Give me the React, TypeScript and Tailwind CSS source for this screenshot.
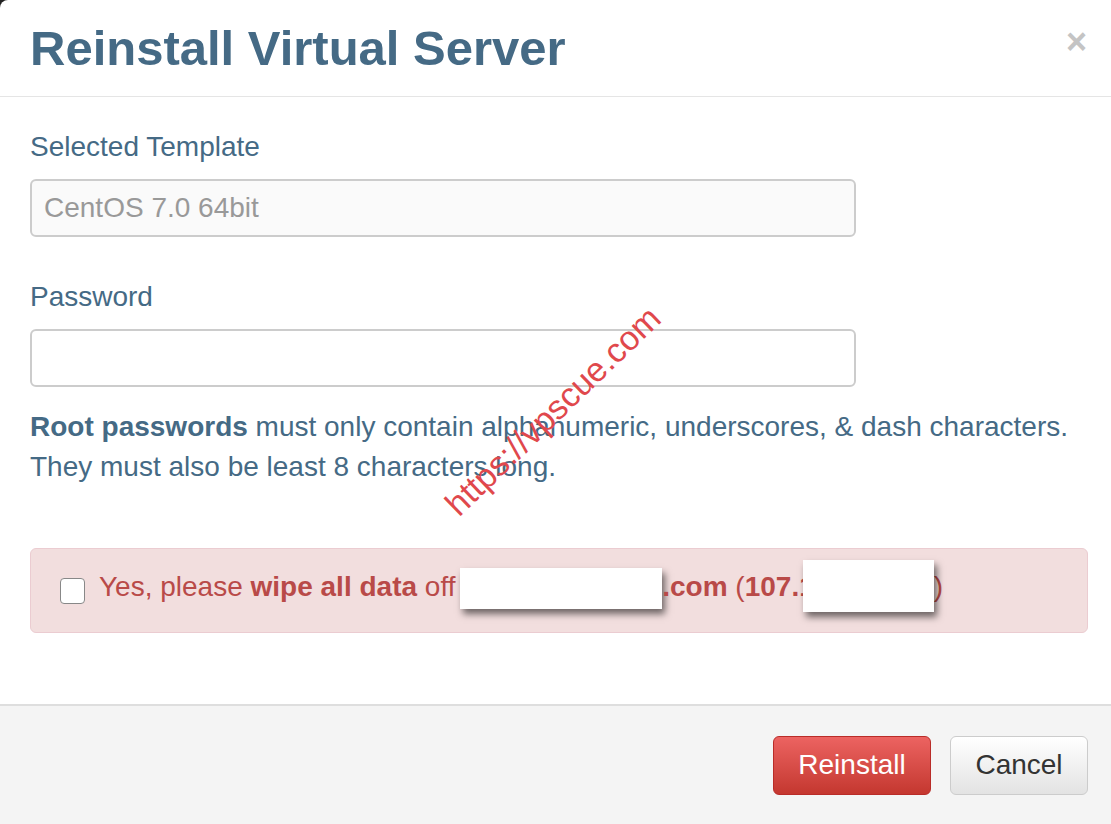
import { useState } from 'react';

export default function App() {
  const [wipe, setWipe] = useState(false);

  return (
    <div className="w-[1111px] h-[824px] bg-[#222] overflow-hidden" style={{ fontFamily: '"Liberation Sans", Arial, sans-serif' }}>
      <div className="relative w-full h-full bg-white rounded-tl-[8px] flex flex-col">
        {/* Header */}
        <div className="h-[97px] shrink-0 border-b border-[#e5e5e5] pl-[30px] pr-[23px] flex items-center justify-between">
          <h3 className="text-[49px] font-bold text-[#456a85] leading-none">Reinstall Virtual Server</h3>
          <button className="text-[36px] font-bold text-[#c4c4c4] leading-none mr-[1px] -mt-[12px]">×</button>
        </div>

        {/* Body */}
        <div className="flex-1 pl-[30px] pr-[23px] pt-[32px] text-[#456a85] text-[28px]">
          <label className="block leading-[36px] mb-[14px]">Selected Template</label>
          <input
            type="text"
            disabled
            value="CentOS 7.0 64bit"
            className="block w-[826px] h-[58px] rounded-[6px] border-2 border-[#ccc] bg-[#fafafa] px-[12px] text-[28px] text-[#999]"
          />

          <label className="block leading-[36px] mt-[42px] mb-[14px]">Password</label>
          <input
            type="password"
            className="block w-[826px] h-[58px] rounded-[6px] border-2 border-[#ccc] bg-white px-[12px] text-[28px] text-[#555] outline-none"
          />

          <p className="mt-[20px] leading-[40px]">
            <strong className="font-bold">Root passwords</strong> must only contain alphanumeric, underscores, &amp; dash characters.
            <br />
            They must also be least 8 characters long.
          </p>

          <div className="mt-[61px] h-[85px] rounded-[6px] border border-[#ebccd1] bg-[#f2dede] pl-[29px] flex items-center text-[#b94a48]">
            <input
              type="checkbox"
              checked={wipe}
              onChange={(e) => setWipe(e.target.checked)}
              className="appearance-none w-[25px] h-[26px] rounded-[4px] border border-[#888] bg-white shrink-0"
            />
            <span className="ml-[14px] whitespace-nowrap -mt-[4px]">
              Yes, please <strong className="font-bold">wipe all data</strong> off{' '}
              <span className="inline-block align-middle -ml-[3px] w-[202px] h-[41px] bg-white shadow-[3px_5px_7px_rgba(0,0,0,0.55)]" />
              <strong className="font-bold">.com</strong> (<strong className="font-bold">107.1</strong>
              <span className="relative -top-[3px] inline-block align-middle -ml-[12px] w-[131px] h-[52px] bg-white shadow-[3px_5px_7px_rgba(0,0,0,0.55)]" />
              )
            </span>
          </div>
        </div>

        {/* Footer */}
        <div className="h-[120px] shrink-0 border-t-2 border-[#dedede] bg-[#f4f4f4] pr-[23px] flex items-center justify-end gap-[19px]">
          <button className="h-[59px] w-[158px] rounded-[6px] border border-[#b92c28] bg-gradient-to-b from-[#ec6361] to-[#c4372f] text-white text-[28px]">
            Reinstall
          </button>
          <button className="h-[59px] w-[138px] rounded-[6px] border border-[#ccc] bg-gradient-to-b from-white to-[#e3e3e3] text-[#333] text-[28px]">
            Cancel
          </button>
        </div>

        {/* Watermark */}
        <div className="absolute left-[553px] top-[411px] -translate-x-1/2 -translate-y-1/2 -rotate-[44deg] text-[34px] text-[#e0484c] whitespace-nowrap pointer-events-none">
          https://vpscue.com
        </div>
      </div>
    </div>
  );
}
